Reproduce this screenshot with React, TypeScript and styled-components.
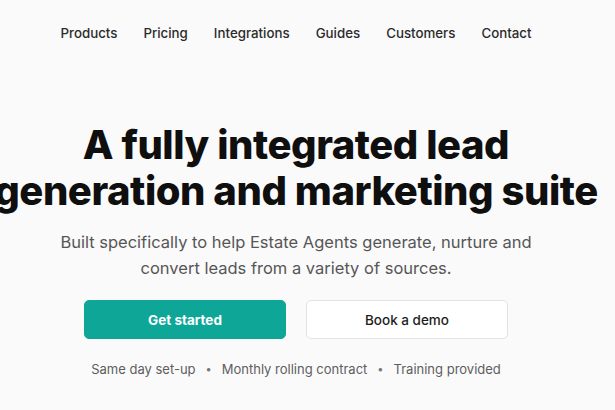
import { Fragment } from 'react';
import styled, { createGlobalStyle } from 'styled-components';

const GlobalStyle = createGlobalStyle`
  html, body {
    margin: 0;
    padding: 0;
    background: #fafafa;
    overflow: hidden;
  }
  body {
    font-family: Inter, "Noto Sans", "Liberation Sans", sans-serif;
    -webkit-font-smoothing: antialiased;
  }
`;

const Page = styled.div`
  width: 592px;
  display: flex;
  flex-direction: column;
  align-items: center;
`;

const Nav = styled.nav`
  height: 65px;
  display: flex;
  align-items: center;
  justify-content: center;
  gap: 26px;
`;

const NavLink = styled.a`
  font-size: 13.3px;
  font-weight: 500;
  color: #2b2b2b;
  text-decoration: none;
  cursor: pointer;
`;

const Hero = styled.section`
  display: flex;
  flex-direction: column;
  align-items: center;
  padding-top: 57px;
`;

const Title = styled.h1`
  width: 614px;
  margin: 0;
  font-size: 40px;
  line-height: 46px;
  font-weight: 800;
  letter-spacing: -0.45px;
  color: #0f0f10;
  text-align: center;
`;

const Subtitle = styled.p`
  width: 480px;
  margin: 15px 0 0;
  font-size: 16.5px;
  line-height: 26px;
  color: #565656;
  text-align: center;
`;

const Actions = styled.div`
  display: flex;
  gap: 20px;
  margin-top: 19px;
`;

const Button = styled.button<{ $primary?: boolean }>`
  width: 202px;
  height: 39px;
  border-radius: 5px;
  font-family: inherit;
  font-size: 13.5px;
  font-weight: ${({ $primary }) => ($primary ? 700 : 500)};
  color: ${({ $primary }) => ($primary ? '#ffffff' : '#1d1d1d')};
  background: ${({ $primary }) => ($primary ? '#0ea797' : '#ffffff')};
  border: 1px solid ${({ $primary }) => ($primary ? '#0ea797' : '#e3e3e3')};
  cursor: pointer;
`;

const Perks = styled.div`
  display: flex;
  align-items: center;
  gap: 10px;
  margin-top: 20px;
  font-size: 13px;
  line-height: 20px;
  color: #5e5e5e;
`;

const Dot = styled.span`
  font-size: 11px;
  color: #777;
`;

const links = ['Products', 'Pricing', 'Integrations', 'Guides', 'Customers', 'Contact'];
const perks = ['Same day set-up', 'Monthly rolling contract', 'Training provided'];

export default function App() {
  return (
    <>
      <GlobalStyle />
      <Page>
        <Nav>
          {links.map((l) => (
            <NavLink key={l}>{l}</NavLink>
          ))}
        </Nav>
        <Hero>
          <Title>A fully integrated lead generation and marketing suite</Title>
          <Subtitle>
            Built specifically to help Estate Agents generate, nurture and convert leads from a variety of sources.
          </Subtitle>
          <Actions>
            <Button $primary>Get started</Button>
            <Button>Book a demo</Button>
          </Actions>
          <Perks>
            {perks.map((p, i) => (
              <Fragment key={p}>
                {i > 0 && <Dot>•</Dot>}
                <span>{p}</span>
              </Fragment>
            ))}
          </Perks>
        </Hero>
      </Page>
    </>
  );
}
